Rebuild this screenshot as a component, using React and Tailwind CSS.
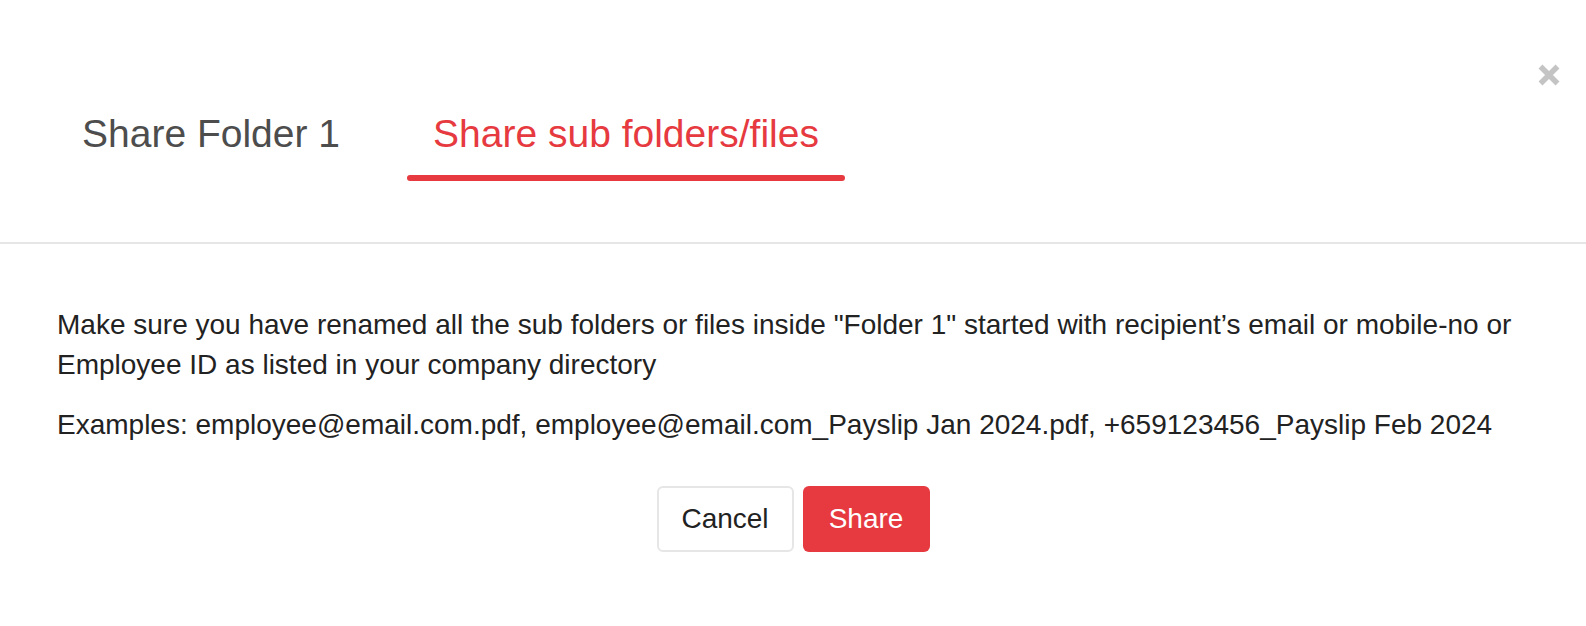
const CloseIcon = () => (
  <svg width="22" height="22" viewBox="0 0 22 22" fill="none">
    <path d="M2.5 2.5L19.5 19.5M19.5 2.5L2.5 19.5" stroke="#c4c4c4" strokeWidth="5.5" />
  </svg>
);

const App = () => {
  return (
    <div className="w-[1586px] h-[626px] bg-white font-['Liberation_Sans',Arial,sans-serif] text-[#222]">
      {/* header with tabs */}
      <div className="relative h-[242px] pl-[57px] pt-[112px]">
        <button className="absolute top-[64px] right-[26px] w-[22px] h-[22px] flex items-center justify-center">
          <CloseIcon />
        </button>
        <div className="flex items-start gap-[42px]">
          <div className="flex flex-col px-[25px]">
            <span className="text-[39px] leading-[44px] text-[#4d4d4d]">Share Folder 1</span>
          </div>
          <div className="flex flex-col items-center w-[438px]">
            <span className="text-[39px] leading-[44px] text-[#e63a40]">Share sub folders/files</span>
            <div className="mt-[19px] h-[6px] w-full rounded-full bg-[#e63a40]" />
          </div>
        </div>
      </div>
      <div className="h-[2px] bg-[#e6e6e6]" />

      {/* body */}
      <div className="pl-[57px] pr-[40px] pt-[61px] text-[28px] leading-[40px]">
        <p className="mb-[20px]">
          Make sure you have renamed all the sub folders or files inside "Folder 1" started with recipient’s email or mobile-no or Employee ID as listed in your company directory
        </p>
        <p>
          Examples: employee@email.com.pdf, employee@email.com_Payslip Jan 2024.pdf, +659123456_Payslip Feb 2024
        </p>
      </div>

      <div className="flex justify-center gap-[9px] pt-[41px]">
        <button className="h-[66px] w-[137px] rounded-[6px] border-2 border-[#e6e6e6] bg-white text-[28px] text-[#222]">
          Cancel
        </button>
        <button className="h-[66px] w-[127px] rounded-[6px] bg-[#e63a40] text-[28px] text-white">
          Share
        </button>
      </div>
    </div>
  );
};

export default App;
